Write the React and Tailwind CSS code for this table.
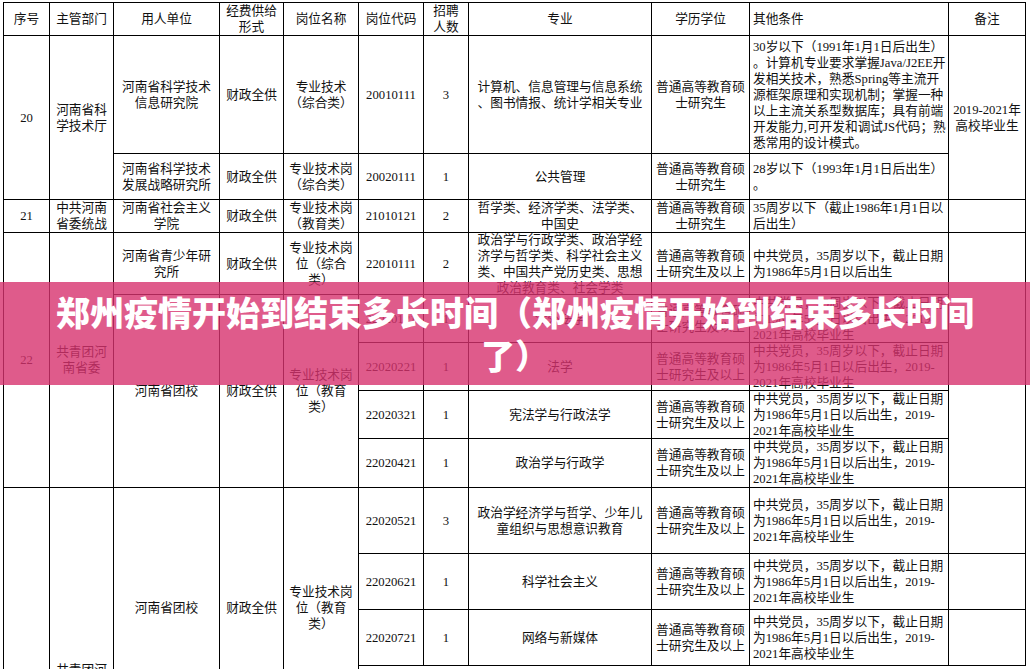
import React from "react";

const colStart = {
  1: "col-start-1",
  2: "col-start-2",
  3: "col-start-3",
  4: "col-start-4",
  5: "col-start-5",
  6: "col-start-6",
  7: "col-start-7",
  8: "col-start-8",
  9: "col-start-9",
  10: "col-start-10",
  11: "col-start-11",
};

const rowStart = {
  1: "row-start-1",
  2: "row-start-2",
  3: "row-start-3",
  4: "row-start-4",
  5: "row-start-5",
  6: "row-start-6",
  7: "row-start-7",
  8: "row-start-8",
  9: "row-start-9",
  10: "row-start-10",
  11: "row-start-11",
  12: "row-start-12",
};

const rowSpan = {
  1: "",
  2: "row-span-2",
  4: "row-span-4",
  5: "row-span-5",
};

const party = [
  "中共党员，35周岁以下，截止日期",
  "为1986年5月1日以后出生，2019-",
  "2021年高校毕业生",
];

// c = column, r = row, s = row span, left = left aligned
const cells = [
  // header
  { c: 1, r: 1, t: ["序号"] },
  { c: 2, r: 1, t: ["主管部门"] },
  { c: 3, r: 1, t: ["用人单位"] },
  { c: 4, r: 1, t: ["经费供给", "形式"] },
  { c: 5, r: 1, t: ["岗位名称"] },
  { c: 6, r: 1, t: ["岗位代码"] },
  { c: 7, r: 1, t: ["招聘", "人数"] },
  { c: 8, r: 1, t: ["专业"] },
  { c: 9, r: 1, t: ["学历学位"] },
  { c: 10, r: 1, t: ["其他条件"], left: true },
  { c: 11, r: 1, t: ["备注"] },

  // 20
  { c: 1, r: 2, s: 2, t: ["20"] },
  { c: 2, r: 2, s: 2, t: ["河南省科", "学技术厅"] },
  { c: 3, r: 2, t: ["河南省科学技术", "信息研究院"] },
  { c: 4, r: 2, t: ["财政全供"] },
  { c: 5, r: 2, t: ["专业技术", "（综合类）"] },
  { c: 6, r: 2, t: ["20010111"] },
  { c: 7, r: 2, t: ["3"] },
  { c: 8, r: 2, t: ["计算机、信息管理与信息系统", "、图书情报、统计学相关专业"] },
  { c: 9, r: 2, t: ["普通高等教育硕", "士研究生"] },
  {
    c: 10,
    r: 2,
    left: true,
    t: [
      "30岁以下（1991年1月1日后出生）",
      "。计算机专业要求掌握Java/J2EE开",
      "发相关技术，熟悉Spring等主流开",
      "源框架原理和实现机制；掌握一种",
      "以上主流关系型数据库；具有前端",
      "开发能力,可开发和调试JS代码；熟",
      "悉常用的设计模式。",
    ],
  },
  { c: 11, r: 2, s: 2, t: ["2019-2021年", "高校毕业生"] },
  { c: 3, r: 3, t: ["河南省科学技术", "发展战略研究所"] },
  { c: 4, r: 3, t: ["财政全供"] },
  { c: 5, r: 3, t: ["专业技术岗", "（综合类）"] },
  { c: 6, r: 3, t: ["20020111"] },
  { c: 7, r: 3, t: ["1"] },
  { c: 8, r: 3, t: ["公共管理"] },
  { c: 9, r: 3, t: ["普通高等教育硕", "士研究生"] },
  { c: 10, r: 3, left: true, t: ["28岁以下（1993年1月1日后出生）", "。"] },

  // 21
  { c: 1, r: 4, t: ["21"] },
  { c: 2, r: 4, t: ["中共河南", "省委统战"] },
  { c: 3, r: 4, t: ["河南省社会主义", "学院"] },
  { c: 4, r: 4, t: ["财政全供"] },
  { c: 5, r: 4, t: ["专业技术岗", "（教育类）"] },
  { c: 6, r: 4, t: ["21010121"] },
  { c: 7, r: 4, t: ["2"] },
  { c: 8, r: 4, t: ["哲学类、经济学类、法学类、", "中国史"] },
  { c: 9, r: 4, t: ["普通高等教育硕", "士研究生"] },
  { c: 10, r: 4, left: true, t: ["35周岁以下（截止1986年1月1日以", "后出生）"] },
  { c: 11, r: 4, t: [] },

  // 22
  { c: 1, r: 5, s: 5, t: ["22"] },
  { c: 2, r: 5, s: 5, t: ["共青团河", "南省委"] },
  { c: 3, r: 5, t: ["河南省青少年研", "究所"] },
  { c: 4, r: 5, t: ["财政全供"] },
  { c: 5, r: 5, t: ["专业技术岗", "位（综合", "类）"] },
  { c: 6, r: 5, t: ["22010111"] },
  { c: 7, r: 5, t: ["2"] },
  {
    c: 8,
    r: 5,
    t: [
      "政治学与行政学类、政治学经",
      "济学与哲学类、科学社会主义",
      "类、中国共产党历史类、思想",
      "政治教育类、社会学类",
    ],
  },
  { c: 9, r: 5, t: ["普通高等教育硕", "士研究生及以上"] },
  { c: 10, r: 5, left: true, t: ["中共党员，35周岁以下，截止日期", "为1986年5月1日以后出生"] },
  { c: 11, r: 5, s: 5, t: [] },
  { c: 3, r: 6, s: 4, t: ["河南省团校"] },
  { c: 4, r: 6, s: 4, t: ["财政全供"] },
  { c: 5, r: 6, s: 4, t: ["专业技术岗", "位（教育", "类）"] },
  { c: 6, r: 6, t: ["22020121"] },
  { c: 7, r: 6, t: ["1"] },
  { c: 8, r: 6, t: ["涉外法学"] },
  { c: 9, r: 6, t: ["普通高等教育硕", "士研究生及以上"] },
  { c: 10, r: 6, left: true, t: party },
  { c: 6, r: 7, t: ["22020221"] },
  { c: 7, r: 7, t: ["1"] },
  { c: 8, r: 7, t: ["法学"] },
  { c: 9, r: 7, t: ["普通高等教育硕", "士研究生及以上"] },
  { c: 10, r: 7, left: true, t: party },
  { c: 6, r: 8, t: ["22020321"] },
  { c: 7, r: 8, t: ["1"] },
  { c: 8, r: 8, t: ["宪法学与行政法学"] },
  { c: 9, r: 8, t: ["普通高等教育硕", "士研究生及以上"] },
  { c: 10, r: 8, left: true, t: party },
  { c: 6, r: 9, t: ["22020421"] },
  { c: 7, r: 9, t: ["1"] },
  { c: 8, r: 9, t: ["政治学与行政学"] },
  { c: 9, r: 9, t: ["普通高等教育硕", "士研究生及以上"] },
  { c: 10, r: 9, left: true, t: party },

  // next group, runs past the bottom edge
  { c: 1, r: 10, s: 5, t: [] },
  { c: 2, r: 10, s: 5, t: ["共青团河", "南省委"] },
  { c: 3, r: 10, s: 4, t: ["河南省团校"] },
  { c: 4, r: 10, s: 4, t: ["财政全供"] },
  { c: 5, r: 10, s: 4, t: ["专业技术岗", "位（教育", "类）"] },
  { c: 6, r: 10, t: ["22020521"] },
  { c: 7, r: 10, t: ["3"] },
  { c: 8, r: 10, t: ["政治学经济学与哲学、少年儿", "童组织与思想意识教育"] },
  { c: 9, r: 10, t: ["普通高等教育硕", "士研究生及以上"] },
  { c: 10, r: 10, left: true, t: party },
  { c: 11, r: 10, t: [] },
  { c: 6, r: 11, t: ["22020621"] },
  { c: 7, r: 11, t: ["1"] },
  { c: 8, r: 11, t: ["科学社会主义"] },
  { c: 9, r: 11, t: ["普通高等教育硕", "士研究生及以上"] },
  { c: 10, r: 11, left: true, t: party },
  { c: 11, r: 11, t: [] },
  { c: 6, r: 12, t: ["22020721"] },
  { c: 7, r: 12, t: ["1"] },
  { c: 8, r: 12, t: ["网络与新媒体"] },
  { c: 9, r: 12, t: ["普通高等教育硕", "士研究生及以上"] },
  { c: 10, r: 12, left: true, t: party },
  { c: 11, r: 12, t: [] },
];

function Cell({ cell }) {
  const align = cell.left
    ? "items-start text-left pl-[3px]"
    : "items-center text-center";
  return (
    <div
      className={`${colStart[cell.c]} ${rowStart[cell.r]} ${rowSpan[cell.s || 1]} flex flex-col justify-center ${align} border-r border-b border-black min-h-0 whitespace-nowrap`}
    >
      {cell.t.map((line, i) => (
        <span key={i}>{line}</span>
      ))}
    </div>
  );
}

export default function App() {
  return (
    <div className="relative h-[669px] w-[1030px] overflow-hidden bg-white">
      <div className="pt-[2px] pl-[3px]">
        <div className="grid w-[1023px] grid-cols-[46px_64px_106px_64px_75px_65px_45px_183px_98px_199px_77px] grid-rows-[33px_118px_46px_33px_62px_48px_48px_48px_49px_66px_56px_56px_62px_140px] border-t border-l border-black font-['Liberation_Serif','Noto_Sans_CJK_SC',serif] text-[12.7px] leading-[16px] text-[#111]">
          {cells.map((cell, i) => (
            <Cell key={i} cell={cell} />
          ))}
        </div>
      </div>

      {/* title banner over the table */}
      <div className="absolute left-0 right-0 top-[282px] h-[103px] bg-[rgba(215,50,110,0.8)] pt-[8px]">
        <p className="whitespace-nowrap text-center font-['Noto_Sans_CJK_SC',sans-serif] text-[34px] font-black leading-[43px] text-white">
          郑州疫情开始到结束多长时间（郑州疫情开始到结束多长时间
          <br />
          了）
        </p>
      </div>
    </div>
  );
}
